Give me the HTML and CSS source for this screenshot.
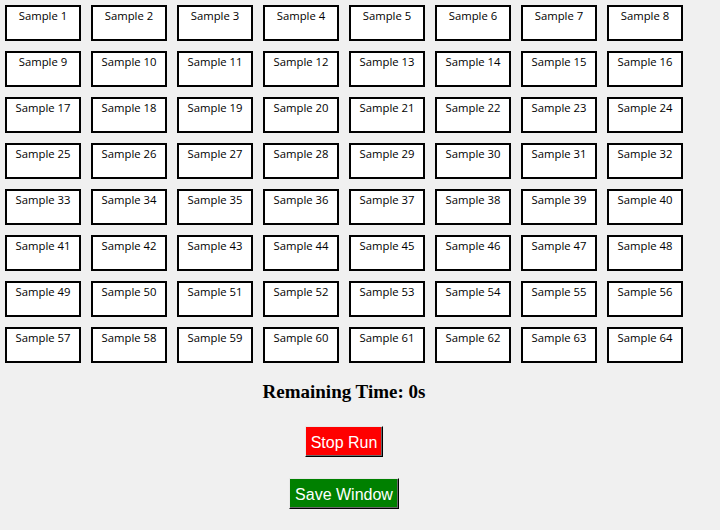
FILE: index.html
```html
<!DOCTYPE html>
<html>
<head>
<meta charset="utf-8">
<link rel="stylesheet" href="styles.css">
</head>
<body>
<div class="app">
  <div class="grid" id="grid"></div>
  <div class="timer">Remaining Time: 0s</div>
  <div class="actions">
    <button class="btn btn-stop">Stop Run</button>
    <button class="btn btn-save">Save Window</button>
  </div>
</div>
<script src="script.js"></script>
</body>
</html>
```
FILE: script.js
```js
const g = document.getElementById('grid');
for (let i = 1; i <= 64; i++) {
  const d = document.createElement('div');
  d.className = 'cell';
  d.textContent = 'Sample ' + i;
  g.appendChild(d);
}
```
FILE: styles.css
```css
html, body {
  margin: 0;
  padding: 0;
  background: #f0f0f0;
  width: 720px;
  height: 530px;
  overflow: hidden;
}
.app {
  width: 688px;
  display: flex;
  flex-direction: column;
  align-items: center;
}
.grid {
  display: grid;
  grid-template-columns: repeat(8, 76px);
  grid-auto-rows: 36px;
  column-gap: 10px;
  row-gap: 10px;
  padding: 5px 0 0 5px;
  align-self: flex-start;
}
.cell {
  box-sizing: border-box;
  border: 2px solid #000;
  background: #fff;
  font-family: "Open Sans", sans-serif;
  font-size: 11.3px;
  line-height: 16px;
  text-align: center;
  padding-top: 1px;
  color: #000;
}
.timer {
  margin-top: 18px;
  font-family: "Liberation Serif", serif;
  font-weight: bold;
  font-size: 19px;
  line-height: 22px;
}
.actions {
  display: flex;
  flex-direction: column;
  align-items: center;
  gap: 21px;
  margin-top: 23px;
}
.btn {
  box-sizing: border-box;
  height: 31px;
  font-family: "Liberation Sans", sans-serif;
  font-size: 16px;
  line-height: 18px;
  white-space: nowrap;
  color: #fff;
  padding: 2px 0 0 0;
  text-align: center;
  border-style: solid;
  border-width: 1px;
  border-color: #e8e8e8 #000 #000 #e8e8e8;
  box-shadow: inset -1px -1px 0 #696969;
}
.btn-stop { background: #ff0000; width: 78px; }
.btn-save { background: #008000; width: 110px; }
```
